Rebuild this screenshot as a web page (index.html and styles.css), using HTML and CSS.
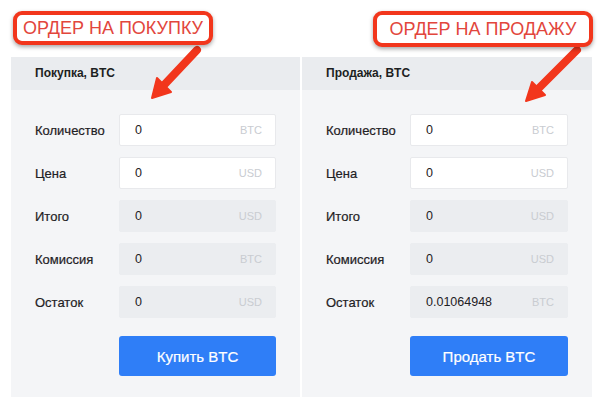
FILE: index.html
```html
<!DOCTYPE html>
<html lang="ru">
<head>
<meta charset="utf-8">
<link rel="stylesheet" href="styles.css">
</head>
<body>
<div class="page">
  <div class="callouts">
    <div class="callout callout-buy">ОРДЕР НА ПОКУПКУ</div>
    <div class="callout callout-sell">ОРДЕР НА ПРОДАЖУ</div>
  </div>
  <div class="panels">
    <section class="panel">
      <div class="panel-head">Покупка, BTC</div>
      <div class="panel-body">
        <div class="label">Количество</div>
        <div class="field"><span class="val">0</span><span class="unit">BTC</span></div>
        <div class="label">Цена</div>
        <div class="field"><span class="val">0</span><span class="unit">USD</span></div>
        <div class="label">Итого</div>
        <div class="field disabled"><span class="val">0</span><span class="unit">USD</span></div>
        <div class="label">Комиссия</div>
        <div class="field disabled"><span class="val">0</span><span class="unit">BTC</span></div>
        <div class="label">Остаток</div>
        <div class="field disabled"><span class="val">0</span><span class="unit">USD</span></div>
        <div class="btn-row"><button class="btn">Купить BTC</button></div>
      </div>
    </section>
    <section class="panel">
      <div class="panel-head">Продажа, BTC</div>
      <div class="panel-body">
        <div class="label">Количество</div>
        <div class="field"><span class="val">0</span><span class="unit">BTC</span></div>
        <div class="label">Цена</div>
        <div class="field"><span class="val">0</span><span class="unit">USD</span></div>
        <div class="label">Итого</div>
        <div class="field disabled"><span class="val">0</span><span class="unit">USD</span></div>
        <div class="label">Комиссия</div>
        <div class="field disabled"><span class="val">0</span><span class="unit">USD</span></div>
        <div class="label">Остаток</div>
        <div class="field disabled"><span class="val">0.01064948</span><span class="unit">BTC</span></div>
        <div class="btn-row"><button class="btn">Продать BTC</button></div>
      </div>
    </section>
  </div>
  <svg class="arrows" width="600" height="407" viewBox="0 0 600 407">
    <g fill="#f2361c" stroke="#f2361c" stroke-linejoin="round">
      <line x1="197" y1="50" x2="165" y2="84" stroke-width="8" stroke-linecap="round"/>
      <polygon points="152,98 171,92 157,78" stroke-width="2"/>
      <line x1="577" y1="50" x2="539" y2="88" stroke-width="8" stroke-linecap="round"/>
      <polygon points="526,101 545,95 532,82" stroke-width="2"/>
    </g>
  </svg>
</div>
</body>
</html>
```
FILE: styles.css
```css
html, body {
  margin: 0;
  padding: 0;
  background: #ffffff;
}
.page {
  position: relative;
  width: 600px;
  height: 407px;
  overflow: hidden;
  font-family: "Liberation Sans", Arial, sans-serif;
  color: #222;
}
.callouts {
  height: 57px;
  display: flex;
  align-items: flex-start;
}
.callout {
  position: relative;
  z-index: 2;
  box-sizing: border-box;
  height: 34px;
  margin-top: 11px;
  background: #fff;
  border: 4px solid #f2361c;
  border-radius: 9px;
  box-shadow: 0 2px 4px rgba(0, 0, 0, 0.35);
  color: #e2463c;
  font-size: 18px;
  line-height: 26px;
  text-align: center;
  white-space: nowrap;
}
.callout-buy {
  margin-left: 13px;
  width: 200px;
}
.callout-sell {
  margin-left: 160px;
  width: 220px;
  height: 36px;
  line-height: 28px;
}
.panels {
  display: flex;
  gap: 2px;
  margin-left: 11px;
}
.panel {
  width: 289px;
  height: 340px;
  background: #f4f5f7;
}
.panel + .panel {
  width: 290px;
}
.panel-head {
  height: 33px;
  background: #eaecef;
  padding-left: 24px;
  font-size: 12px;
  font-weight: bold;
  line-height: 33px;
  color: #1d1f22;
}
.panel-body {
  display: grid;
  grid-template-columns: 84px 1fr;
  row-gap: 11px;
  align-items: center;
  padding: 24px 24px 20px 24px;
}
.label {
  font-size: 13px;
  color: #1f2124;
  -webkit-text-stroke: 0.2px #1f2124;
}
.field {
  box-sizing: border-box;
  height: 32px;
  display: flex;
  align-items: center;
  justify-content: space-between;
  padding: 0 13px 0 15px;
  background: #fff;
  border: 1px solid #e8e9ec;
  border-radius: 2px;
}
.field.disabled {
  background: #ebedf0;
  border-color: #ebedf0;
}
.val {
  font-size: 12.5px;
  color: #1f2124;
}
.unit {
  font-size: 11px;
  color: #c9ccd1;
}
.btn-row {
  grid-column: 2;
  padding-top: 7px;
}
.btn {
  display: block;
  width: 100%;
  height: 40px;
  border: 0;
  border-radius: 3px;
  background: #2f7ef7;
  color: #fff;
  font-family: "Liberation Sans", Arial, sans-serif;
  font-size: 15px;
  -webkit-text-stroke: 0.2px #fff;
}
.arrows {
  position: absolute;
  left: 0;
  top: 0;
  z-index: 1;
  pointer-events: none;
}
```
